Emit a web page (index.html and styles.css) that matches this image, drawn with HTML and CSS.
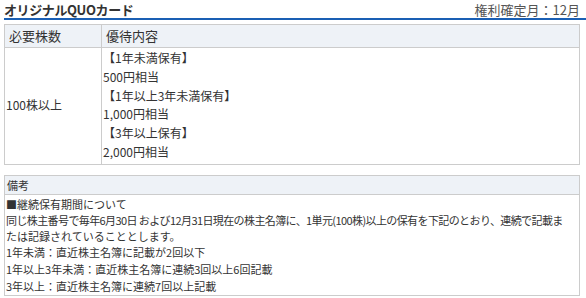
FILE: index.html
```html
<!DOCTYPE html>
<html lang="ja">
<head>
<meta charset="utf-8">
<title>オリジナルQUOカード</title>
<link rel="stylesheet" href="styles.css">
</head>
<body>
<div class="benefit">
  <div class="benefit-head">
    <h2 class="benefit-title">オリジナルQUOカード</h2>
    <span class="benefit-month">権利確定月：12月</span>
  </div>

  <table class="grid">
    <colgroup>
      <col class="grid-col-shares">
      <col>
    </colgroup>
    <thead>
      <tr>
        <th>必要株数</th>
        <th>優待内容</th>
      </tr>
    </thead>
    <tbody>
      <tr>
        <td>100株以上</td>
        <td>
          <div>【1年未満保有】</div>
          <div>500円相当</div>
          <div>【1年以上3年未満保有】</div>
          <div>1,000円相当</div>
          <div>【3年以上保有】</div>
          <div>2,000円相当</div>
        </td>
      </tr>
    </tbody>
  </table>

  <table class="notes">
    <thead>
      <tr><th>備考</th></tr>
    </thead>
    <tbody>
      <tr>
        <td>
          <div class="notes-para">■継続保有期間について</div>
          <div class="notes-para notes-tight">同じ株主番号で毎年6月30日 および12月31日現在の株主名簿に、1単元(100株)以上の保有を下記のとおり、連続で記載ま</div>
          <div class="notes-para">たは記録されていることとします。</div>
          <div class="notes-line">1年未満：直近株主名簿に記載が2回以下</div>
          <div class="notes-line">1年以上3年未満：直近株主名簿に連続3回以上6回記載</div>
          <div class="notes-line">3年以上：直近株主名簿に連続7回以上記載</div>
        </td>
      </tr>
    </tbody>
  </table>
</div>
</body>
</html>
```

FILE: styles.css
```css
html, body {
  margin: 0;
  padding: 0;
  background: #fff;
}

body {
  font-family: "Noto Sans CJK JP", "Noto Sans", sans-serif;
  color: #333;
}

.benefit {
  margin-left: 4px;
  width: 582px;
}

.benefit-head {
  display: flex;
  justify-content: space-between;
  align-items: flex-end;
  height: 18px;
  border-bottom: 2px solid #1a5fb4;
  padding-right: 6px;
}

.benefit-title {
  margin: 0;
  font-size: 13px;
  font-weight: bold;
  line-height: 16px;
  color: #333;
  letter-spacing: -0.4px;
}

.benefit-month {
  font-size: 13px;
  line-height: 16px;
  color: #555;
}

.grid,
.notes {
  width: 99%;
  border-collapse: collapse;
  table-layout: fixed;
  margin-top: 4px;
}

.grid-col-shares {
  width: 97px;
}

.grid th,
.grid td,
.notes th,
.notes td {
  border: 1px solid #ccc;
  text-align: left;
  font-weight: normal;
  vertical-align: middle;
}

.grid th {
  background: #eef2f7;
  font-size: 13px;
  line-height: 18px;
  padding: 2px 4px;
}

.grid td {
  font-size: 12px;
  line-height: 18.8px;
  padding: 1px 1px 2px;
}

.notes {
  margin-top: 10px;
}

.notes th {
  background: #eef2f7;
  font-size: 11px;
  line-height: 16px;
  padding: 1px 2px;
}

.notes td {
  font-size: 11px;
  padding: 1px 1px 0;
}

.notes-para {
  height: 16px;
  line-height: 16px;
  white-space: nowrap;
}

.notes-tight {
  letter-spacing: -0.6px;
}

.notes-line {
  height: 17px;
  line-height: 17px;
}
```
